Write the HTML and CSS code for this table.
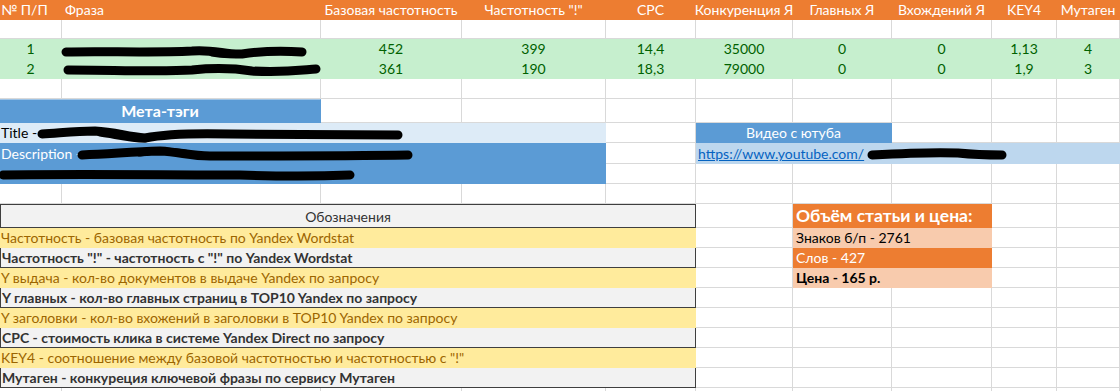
FILE: index.html
```html
<!DOCTYPE html>
<html lang="ru">
<head>
<meta charset="utf-8">
<title>Семантика</title>
<link rel="stylesheet" href="styles.css">
</head>
<body>
<div class="sheet">
  <!-- header row -->
  <div class="c hd left">№ П/П</div>
  <div class="c hd left pad">Фраза</div>
  <div class="c hd">Базовая частотность</div>
  <div class="c hd">Частотность "!"</div>
  <div class="c hd">CPC</div>
  <div class="c hd">Конкуренция Я</div>
  <div class="c hd">Главных Я</div>
  <div class="c hd">Вхождений Я</div>
  <div class="c hd">KEY4</div>
  <div class="c hd">Мутаген</div>

  <!-- empty row -->
  <div class="c"></div><div class="c"></div><div class="c"></div><div class="c"></div><div class="c"></div>
  <div class="c"></div><div class="c"></div><div class="c"></div><div class="c"></div><div class="c"></div>

  <!-- data row 1 -->
  <div class="c gr">1</div>
  <div class="c gr left pad rel"><svg class="scrib s-row1" width="259" height="20" viewBox="0 0 259 20"><path d="M4 13 C40 12 90 14 130 12 C150 10 165 16 180 15 C200 12 215 11 240 13" /><path class="thin" d="M150 14 C160 16 170 16 178 15" /></svg></div>
  <div class="c gr">452</div>
  <div class="c gr">399</div>
  <div class="c gr">14,4</div>
  <div class="c gr">35000</div>
  <div class="c gr">0</div>
  <div class="c gr">0</div>
  <div class="c gr">1,13</div>
  <div class="c gr">4</div>

  <!-- data row 2 -->
  <div class="c gr">2</div>
  <div class="c gr left pad rel"><svg class="scrib s-row2" width="259" height="20" viewBox="0 0 259 20"><path d="M6 11 C50 11 100 13 130 11 C150 9 170 9 190 12 C220 14 240 11 254 10" /></svg></div>
  <div class="c gr">361</div>
  <div class="c gr">190</div>
  <div class="c gr">18,3</div>
  <div class="c gr">79000</div>
  <div class="c gr">0</div>
  <div class="c gr">0</div>
  <div class="c gr">1,9</div>
  <div class="c gr">3</div>

  <!-- empty row -->
  <div class="c"></div><div class="c"></div><div class="c"></div><div class="c"></div><div class="c"></div>
  <div class="c"></div><div class="c"></div><div class="c"></div><div class="c"></div><div class="c"></div>

  <!-- meta header -->
  <div class="c meta span2">Мета-тэги</div>
  <div class="c"></div><div class="c"></div><div class="c"></div><div class="c"></div>
  <div class="c"></div><div class="c"></div><div class="c"></div><div class="c"></div>

  <!-- title row -->
  <div class="c ltblue span4 left rel">Title -<svg class="scrib s-title" width="400" height="20" viewBox="0 0 400 20"><path d="M42 11 C60 10 75 8 95 8 C115 9 125 13 145 15 C165 11 190 10 230 11 C300 11 360 12 398 12" /><path class="thin" d="M100 10 C115 12 130 16 145 16" /></svg></div>
  <div class="c"></div>
  <div class="c video span2">Видео с ютуба</div>
  <div class="c"></div><div class="c"></div><div class="c"></div>

  <!-- description row -->
  <div class="c blue span4 left rel">Description -<svg class="scrib s-desc" width="420" height="20" viewBox="0 0 420 20"><path d="M82 12 C110 11 130 9 160 8 C180 9 190 13 210 13 C280 13 350 13 408 12" /><path class="thin" d="M140 10 C155 7 175 8 190 11" /></svg></div>
  <div class="c"></div>
  <div class="c link span5 left rel"><span class="url">https://www.youtube.com/</span><svg class="scrib s-link" width="140" height="20" viewBox="0 0 140 20"><path d="M4 12 C40 10 70 9 90 10 C110 12 125 12 134 12" /></svg></div>

  <!-- third meta row -->
  <div class="c blue span4 left rel"><svg class="scrib s-third" width="360" height="20" viewBox="0 0 360 20"><path d="M3 11 C80 10 160 11 240 11 C270 12 300 13 350 11" /></svg></div>
  <div class="c"></div><div class="c"></div><div class="c"></div><div class="c"></div><div class="c"></div><div class="c"></div>

  <!-- empty row -->
  <div class="c"></div><div class="c"></div><div class="c"></div><div class="c"></div><div class="c"></div>
  <div class="c"></div><div class="c"></div><div class="c"></div><div class="c"></div><div class="c"></div>

  <!-- legend header + price header -->
  <div class="c lg-head span5">Обозначения</div>
  <div class="c"></div>
  <div class="c price-head span2 left">Объём статьи и цена:</div>
  <div class="c"></div><div class="c"></div>

  <div class="c lg-y span5 left">Частотность - базовая частотность по Yandex Wordstat</div>
  <div class="c"></div>
  <div class="c price-lt span2 left">Знаков б/п - 2761</div>
  <div class="c"></div><div class="c"></div>

  <div class="c lg-g span5 left">Частотность "!" - частотность с "!" по Yandex Wordstat</div>
  <div class="c"></div>
  <div class="c price-or span2 left">Слов - 427</div>
  <div class="c"></div><div class="c"></div>

  <div class="c lg-y span5 left">Y выдача - кол-во документов в выдаче Yandex по запросу</div>
  <div class="c"></div>
  <div class="c price-lt span2 left bold">Цена - 165 р.</div>
  <div class="c"></div><div class="c"></div>

  <div class="c lg-g span5 left">Y главных - кол-во главных страниц в TOP10 Yandex по запросу</div>
  <div class="c"></div><div class="c"></div><div class="c"></div><div class="c"></div><div class="c"></div>

  <div class="c lg-y span5 left">Y заголовки - кол-во вхожений в заголовки в TOP10 Yandex по запросу</div>
  <div class="c"></div><div class="c"></div><div class="c"></div><div class="c"></div><div class="c"></div>

  <div class="c lg-g span5 left">CPC - стоимость клика в системе Yandex Direct по запросу</div>
  <div class="c"></div><div class="c"></div><div class="c"></div><div class="c"></div><div class="c"></div>

  <div class="c lg-y span5 left">KEY4 - соотношение между базовой частотностью и частотностью с "!"</div>
  <div class="c"></div><div class="c"></div><div class="c"></div><div class="c"></div><div class="c"></div>

  <div class="c lg-g span5 left">Мутаген - конкуреция ключевой фразы по сервису Мутаген</div>
  <div class="c"></div><div class="c"></div><div class="c"></div><div class="c"></div><div class="c"></div>

  <!-- trailing row -->
  <div class="c"></div><div class="c"></div><div class="c"></div><div class="c"></div><div class="c"></div>
  <div class="c"></div><div class="c"></div><div class="c"></div><div class="c"></div><div class="c"></div>
</div>
</body>
</html>
```

FILE: styles.css
```css
html, body {
  margin: 0;
  padding: 0;
  background: #ffffff;
  overflow: hidden;
}

.sheet {
  display: grid;
  grid-template-columns: 62px 259px 141px 144px 90px 97px 99px 100px 65px 63px;
  grid-template-rows: 20px 19px 20px 20px 20px 24px 20px 21px 20px 20px 24px 20px 20px 20px 20px 20px 20px 20px 20px 20px;
  width: 1120px;
  font-family: Lato, "Liberation Sans", sans-serif;
  font-size: 14px;
  color: #000;
}

.c {
  box-sizing: border-box;
  border-right: 1px solid #d9d9d9;
  border-bottom: 1px solid #d9d9d9;
  display: flex;
  align-items: flex-end;
  justify-content: center;
  padding-bottom: 2px;
  white-space: nowrap;
  overflow: visible;
  line-height: 1;
  min-width: 0;
}

.left { justify-content: flex-start; padding-left: 1px; }
.pad { padding-left: 3px; }
.rel { position: relative; }
.bold { font-weight: 700; }

.span2 { grid-column: span 2; }
.span4 { grid-column: span 4; }
.span5 { grid-column: span 5; }

.hd {
  background: #ed7d31;
  color: #fff;
  border-color: #ed7d31;
}

.gr {
  background: #c6efce;
  color: #006100;
  border-color: #c6efce;
}

.meta {
  background: #5b9bd5;
  border-color: #5b9bd5;
  color: #fff;
  font-weight: 700;
  font-size: 16px;
  border-top: 1px solid #9dc3e6;
  padding-bottom: 3px;
}

.ltblue {
  background: #ddebf7;
  border-color: #ddebf7;
}

.blue {
  background: #5b9bd5;
  border-color: #5b9bd5;
  color: #fff;
}

.video {
  background: #5b9bd5;
  border-color: #5b9bd5;
  color: #fff;
}

.link {
  background: #bdd7ee;
  border-color: #bdd7ee;
  padding-left: 2px;
}

.url {
  color: #0563c1;
  text-decoration: underline;
}

.lg-head {
  background: #f2f2f2;
  border: 1px solid #3f3f3f;
  color: #333;
  padding-bottom: 3px;
}

.lg-y {
  background: #ffeb9c;
  border-color: #ffeb9c;
  color: #9c6500;
}

.lg-g {
  background: #f2f2f2;
  border: 1px solid #3f3f3f;
  border-top: 0;
  color: #333;
  font-weight: 700;
}

.price-head {
  background: #ed7d31;
  border-color: #ed7d31;
  color: #fff;
  font-weight: 700;
  font-size: 17.5px;
  padding-left: 3px;
  padding-bottom: 3px;
}

.price-lt {
  background: #f8cbad;
  border-color: #f8cbad;
  color: #000;
  padding-left: 3px;
}

.price-or {
  background: #ed7d31;
  border-color: #ed7d31;
  color: #fff;
  padding-left: 3px;
}

.scrib {
  position: absolute;
  left: 0;
  top: 0;
  overflow: visible;
  pointer-events: none;
}

.scrib path {
  fill: none;
  stroke: #000;
  stroke-width: 9;
  stroke-linecap: round;
  stroke-linejoin: round;
}

.scrib path.thin {
  stroke-width: 7;
}

.s-link { left: 172px; }
```
